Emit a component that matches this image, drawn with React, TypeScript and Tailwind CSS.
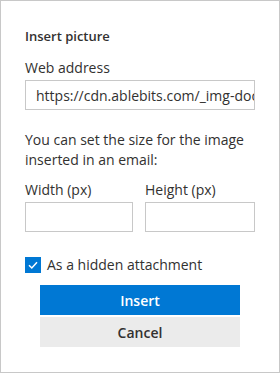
import React from "react";

export default function App() {
  const font = { fontFamily: '"Open Sans", "Noto Sans", sans-serif' };
  return (
    <div
      className="w-[280px] h-[373px] border border-[#c8c8c8] bg-white px-[24px] text-[#323130] box-border"
      style={font}
    >
      <div className="pt-[25px] text-[13px] leading-[20px] font-semibold">Insert picture</div>
      <div className="mt-[12px] text-[14px] leading-[20px]">Web address</div>
      <div className="mt-[2px] h-[30px] w-[230px] border border-[#c8c8c8] px-[10px] flex items-center overflow-hidden">
        <span className="text-[14px] whitespace-nowrap">https://cdn.ablebits.com/_img-doc/</span>
      </div>
      <div className="mt-[20px] text-[14px] leading-[20px]">
        You can set the size for the image
        <br />
        inserted in an email:
      </div>
      <div className="mt-[10px] flex gap-[12px]">
        <div className="flex flex-col w-[108px]">
          <div className="text-[14px] leading-[20px]">Width (px)</div>
          <div className="mt-[2px] h-[30px] border border-[#c8c8c8]" />
        </div>
        <div className="flex flex-col w-[110px]">
          <div className="text-[14px] leading-[20px]">Height (px)</div>
          <div className="mt-[2px] h-[30px] border border-[#c8c8c8]" />
        </div>
      </div>
      <div className="mt-[23px] flex items-center gap-[6px]">
        <div className="w-[16px] h-[16px] bg-[#0078d4] flex items-center justify-center">
          <svg width="12" height="12" viewBox="0 0 12 12">
            <path d="M2 6.2 L4.8 9 L10 3.2" fill="none" stroke="white" strokeWidth="1.5" />
          </svg>
        </div>
        <span className="text-[14px] leading-[20px]">As a hidden attachment</span>
      </div>
      <div className="mt-[10px] flex flex-col items-center gap-[2px]">
        <button className="w-[200px] h-[30px] bg-[#0078d4] text-white text-[14px] font-semibold">Insert</button>
        <button className="w-[200px] h-[30px] bg-[#ebebeb] text-[#323130] text-[14px] font-semibold">Cancel</button>
      </div>
    </div>
  );
}
